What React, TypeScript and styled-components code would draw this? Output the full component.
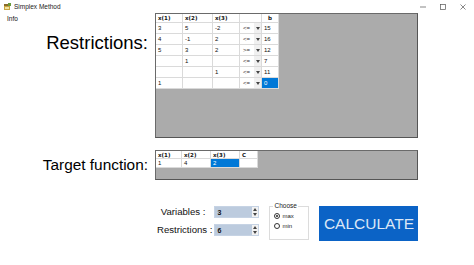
import React from 'react';
import styled, { createGlobalStyle } from 'styled-components';

const GlobalStyle = createGlobalStyle`
  html, body {
    margin: 0;
    padding: 0;
    background: #ffffff;
  }
  body {
    font-family: "Liberation Sans", Arial, sans-serif;
  }
`;

const Window = styled.div`
  width: 474px;
  height: 265px;
  overflow: hidden;
  background: #ffffff;
  display: flex;
  flex-direction: column;
`;

const TitleBar = styled.div`
  height: 13px;
  display: flex;
  align-items: center;
  padding-left: 4px;
`;

const TitleText = styled.span`
  margin-left: 3px;
  font-size: 6.5px;
  color: #222;
`;

const Controls = styled.div`
  margin-left: auto;
  display: flex;
  padding-right: 1px;
`;

const ControlButton = styled.div`
  width: 20px;
  height: 13px;
  display: flex;
  align-items: center;
  justify-content: center;
`;

const Main = styled.div`
  display: grid;
  grid-template-columns: 155px 263px;
  row-gap: 12px;
`;

const LeftCell = styled.div`
  display: flex;
  flex-direction: column;
`;

const MenuItem = styled.span`
  font-size: 6.5px;
  line-height: 8px;
  padding: 2px 0 0 7px;
  color: #111;
`;

const SectionLabel = styled.div<{ $size: number; $top?: number }>`
  text-align: right;
  padding-right: 7px;
  font-size: ${({ $size }) => $size}px;
  line-height: ${({ $size }) => $size + 3}px;
  margin-top: ${({ $top }) => $top ?? 0}px;
  align-self: ${({ $top }) => ($top === undefined ? 'center' : 'stretch')};
  color: #000;
`;

const Panel = styled.div<{ $height: number }>`
  box-sizing: border-box;
  height: ${({ $height }) => $height}px;
  background: #ababab;
  border: 1px solid #6a6a6a;
  border-right-color: #555;
  border-bottom-color: #555;
`;

const Table = styled.div<{ $cols: string }>`
  display: grid;
  grid-template-columns: ${({ $cols }) => $cols};
  width: max-content;
  background: #ffffff;
`;

const Cell = styled.div<{ $h: number; $selected?: boolean; $header?: boolean; $center?: boolean }>`
  box-sizing: border-box;
  height: ${({ $h }) => $h}px;
  display: flex;
  align-items: center;
  justify-content: ${({ $center }) => ($center ? 'center' : 'flex-start')};
  padding-left: ${({ $center }) => ($center ? 0 : 2)}px;
  border-right: 1px solid #dadada;
  border-bottom: 1px solid #dadada;
  overflow: hidden;
  white-space: nowrap;
  font-family: ${({ $header }) => ($header ? '"DejaVu Sans", Verdana, sans-serif' : '"Liberation Sans", Arial, sans-serif')};
  font-weight: ${({ $header }) => ($header ? 'bold' : 'normal')};
  font-size: ${({ $header }) => ($header ? 5.5 : 6)}px;
  background: ${({ $selected }) => ($selected ? '#0078d7' : '#ffffff')};
  color: ${({ $selected }) => ($selected ? '#ffffff' : '#111')};
`;

const ComboText = styled.span`
  padding-left: 3px;
  color: #333;
`;

const ComboArrow = styled.span`
  margin-left: auto;
  width: 7px;
  height: 100%;
  display: flex;
  align-items: center;
  justify-content: center;
  background: #f0f0f0;
`;

const BottomRow = styled.div`
  display: flex;
  align-items: flex-start;
  margin-top: 22px;
  padding-left: 157px;
`;

const Form = styled.div`
  display: grid;
  grid-template-columns: auto 45px;
  row-gap: 6px;
  margin-top: 4px;
`;

const FieldLabel = styled.span<{ $gap: number }>`
  justify-self: end;
  margin-right: ${({ $gap }) => $gap}px;
  font-size: 9.6px;
  line-height: 12px;
  color: #111;
`;

const SpinBox = styled.div`
  box-sizing: border-box;
  height: 12px;
  display: flex;
  align-items: center;
  background: #bccbde;
  border: 1px solid #c6d3e4;
`;

const SpinValue = styled.span`
  padding-left: 2px;
  font-size: 7px;
  font-weight: bold;
  color: #111;
`;

const SpinButtons = styled.div`
  margin-left: auto;
  width: 6px;
  height: 100%;
  display: flex;
  flex-direction: column;
  background: #f2f2f2;
`;

const SpinHalf = styled.span`
  flex: 1;
  display: flex;
  align-items: center;
  justify-content: center;
`;

const GroupBox = styled.fieldset`
  box-sizing: border-box;
  width: 40px;
  height: 38px;
  margin: 0 0 0 10px;
  padding: 1px 0 0 4px;
  border: 1px solid #dcdcdc;
  display: flex;
  flex-direction: column;
  gap: 1px;
`;

const Legend = styled.legend`
  padding: 0 1px;
  margin-left: -1px;
  font-size: 6.5px;
  line-height: 8px;
  color: #222;
`;

const RadioRow = styled.label`
  display: flex;
  align-items: center;
  gap: 2px;
  height: 9px;
  font-size: 6px;
  color: #222;
`;

const RadioCircle = styled.span<{ $checked?: boolean }>`
  box-sizing: border-box;
  width: 6px;
  height: 6px;
  border-radius: 50%;
  border: 1px solid #333;
  background: #fff;
  display: flex;
  align-items: center;
  justify-content: center;
  &::after {
    content: '';
    width: 2px;
    height: 2px;
    border-radius: 50%;
    background: ${({ $checked }) => ($checked ? '#222' : 'transparent')};
  }
`;

const CalcButton = styled.button`
  width: 99px;
  height: 35px;
  margin: 4px 0 0 10px;
  padding: 0;
  border: none;
  background: #0b63c6;
  color: #dbe7f6;
  font-family: "Liberation Sans", Arial, sans-serif;
  font-size: 15.5px;
`;

const Tri = ({ down }: { down?: boolean }) => (
  <svg width="4" height="3" viewBox="0 0 4 3">
    <path d={down ? 'M0 0 L4 0 L2 3 Z' : 'M0 3 L4 3 L2 0 Z'} fill="#444" />
  </svg>
);

const AppIcon = () => (
  <svg width="7" height="7" viewBox="0 0 7 7">
    <rect x="0" y="1" width="6" height="6" fill="#c9a640" />
    <rect x="0" y="1" width="6" height="2" fill="#8a6a2a" />
    <rect x="1" y="4" width="4" height="2" fill="#f1e3a3" />
    <rect x="4" y="0" width="3" height="3" fill="#6a9a3c" />
  </svg>
);

type Row = { values: string[]; sign?: string; selected?: number };

const restrictionCols = [27, 30, 27, 22, 17];
const restrictionHeader = ['x(1)', 'x(2)', 'x(3)', '', 'b'];
const restrictionRows: Row[] = [
  { values: ['3', '5', '-2', '15'], sign: '<=' },
  { values: ['4', '-1', '2', '16'], sign: '<=' },
  { values: ['5', '3', '2', '12'], sign: '>=' },
  { values: ['', '1', '', '7'], sign: '<=' },
  { values: ['', '', '1', '11'], sign: '<=' },
  { values: ['1', '', '', '0'], sign: '<=', selected: 3 },
];

const targetCols = [26, 29, 29, 18];
const targetHeader = ['x(1)', 'x(2)', 'x(3)', 'C'];
const targetRows: Row[] = [{ values: ['1', '4', '2', ''], selected: 2 }];

type GridProps = {
  cols: number[];
  header: string[];
  rows: Row[];
  headerHeight: number;
  rowHeight: number;
};

const DataGrid: React.FC<GridProps> = ({ cols, header, rows, headerHeight, rowHeight }) => (
  <Table $cols={cols.map((c) => `${c}px`).join(' ')}>
    {header.map((h, i) => (
      <Cell key={`h${i}`} $h={headerHeight} $header $center={h === 'b'}>
        {h}
      </Cell>
    ))}
    {rows.map((row, r) => {
      const cells: React.ReactNode[] = [];
      row.values.forEach((v, i) => {
        if (row.sign && i === 3) {
          cells.push(
            <Cell key={`s${r}`} $h={rowHeight} style={{ paddingLeft: 0 }}>
              <ComboText>{row.sign}</ComboText>
              <ComboArrow>
                <Tri down />
              </ComboArrow>
            </Cell>
          );
        }
        cells.push(
          <Cell key={`c${r}-${i}`} $h={rowHeight} $selected={row.selected === i}>
            {v}
          </Cell>
        );
      });
      return cells;
    })}
  </Table>
);

const Spinner: React.FC<{ value: string }> = ({ value }) => (
  <SpinBox>
    <SpinValue>{value}</SpinValue>
    <SpinButtons>
      <SpinHalf>
        <Tri />
      </SpinHalf>
      <SpinHalf>
        <Tri down />
      </SpinHalf>
    </SpinButtons>
  </SpinBox>
);

export default function App() {
  return (
    <Window>
      <GlobalStyle />
      <TitleBar>
        <AppIcon />
        <TitleText>Simplex Method</TitleText>
        <Controls>
          <ControlButton>
            <svg width="6" height="6" viewBox="0 0 6 6">
              <line x1="0" y1="3" x2="6" y2="3" stroke="#555" strokeWidth="0.7" />
            </svg>
          </ControlButton>
          <ControlButton>
            <svg width="6" height="6" viewBox="0 0 6 6">
              <rect x="0.5" y="0.5" width="5" height="5" fill="none" stroke="#555" strokeWidth="0.7" />
            </svg>
          </ControlButton>
          <ControlButton>
            <svg width="6" height="6" viewBox="0 0 6 6">
              <path d="M0.5 0.5 L5.5 5.5 M5.5 0.5 L0.5 5.5" stroke="#555" strokeWidth="0.7" />
            </svg>
          </ControlButton>
        </Controls>
      </TitleBar>

      <Main>
        <LeftCell>
          <MenuItem>Info</MenuItem>
          <SectionLabel $size={18.5} $top={9}>
            Restrictions:
          </SectionLabel>
        </LeftCell>
        <Panel $height={125}>
          <DataGrid
            cols={restrictionCols}
            header={restrictionHeader}
            rows={restrictionRows}
            headerHeight={9}
            rowHeight={11}
          />
        </Panel>

        <SectionLabel $size={15.4}>Target function:</SectionLabel>
        <Panel $height={30}>
          <DataGrid cols={targetCols} header={targetHeader} rows={targetRows} headerHeight={8} rowHeight={9} />
        </Panel>
      </Main>

      <BottomRow>
        <Form>
          <FieldLabel $gap={9}>Variables :</FieldLabel>
          <Spinner value="3" />
          <FieldLabel $gap={2}>Restrictions :</FieldLabel>
          <Spinner value="6" />
        </Form>
        <GroupBox>
          <Legend>Choose</Legend>
          <RadioRow>
            <RadioCircle $checked />
            max
          </RadioRow>
          <RadioRow>
            <RadioCircle />
            min
          </RadioRow>
        </GroupBox>
        <CalcButton>CALCULATE</CalcButton>
      </BottomRow>
    </Window>
  );
}
